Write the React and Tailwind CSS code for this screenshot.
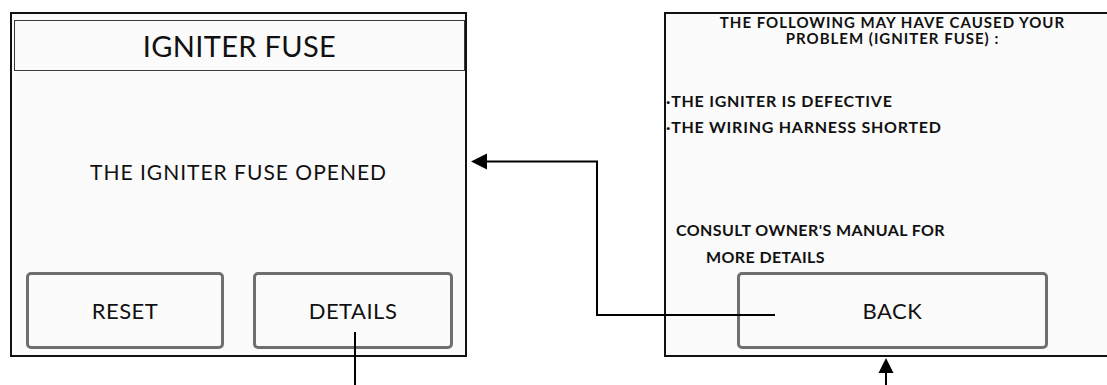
import React from "react";

const font = { fontFamily: '"Lato", "Open Sans", sans-serif' };

function Btn({ className = "", children }) {
  return (
    <div
      className={
        "flex items-center justify-center rounded-[5px] border-[3px] border-[#6f6f6f] bg-[#fbfbfb] text-[22px] tracking-[0.5px] text-[#111] " +
        className
      }
    >
      {children}
    </div>
  );
}

export default function App() {
  return (
    <div
      className="relative h-[385px] w-[1107px] overflow-hidden bg-white text-[#111]"
      style={font}
    >
      <div className="flex pt-[12px] pl-[10px] gap-[197px]">
        {/* Left screen */}
        <div className="flex h-[345px] w-[457px] shrink-0 flex-col border-2 border-[#111] bg-[#fbfbfb]">
          <div className="ml-[2px] mt-[6px] flex h-[51px] w-[451px] items-center justify-center border-[1.5px] border-[#3a3a3a] text-[29px] leading-none tracking-[0.35px]">
            IGNITER FUSE
          </div>
          <div className="mt-[90px] text-center text-[21px] leading-none tracking-[1px]">
            THE IGNITER FUSE OPENED
          </div>
          <div className="mt-auto mb-[6px] ml-[14px] flex gap-[29px]">
            <Btn className="h-[77px] w-[198px]">RESET</Btn>
            <Btn className="h-[77px] w-[200px]">DETAILS</Btn>
          </div>
        </div>

        {/* Right screen */}
        <div className="flex h-[345px] w-[457px] shrink-0 flex-col border-2 border-[#111] bg-[#fbfbfb] font-bold">
          <div className="text-center text-[15px] leading-[16px] tracking-[1px]">
            <div>THE FOLLOWING MAY HAVE CAUSED YOUR</div>
            <div>PROBLEM (IGNITER FUSE) :</div>
          </div>
          <div className="mt-[42px] text-[16px] leading-[26px] tracking-[0.75px]">
            <div>·THE IGNITER IS DEFECTIVE</div>
            <div>·THE WIRING HARNESS SHORTED</div>
          </div>
          <div className="mt-[76px] pl-[10px] text-[16px] leading-[27px] tracking-[0.4px]">
            <div>CONSULT OWNER'S MANUAL FOR</div>
            <div className="pl-[30px]">MORE DETAILS</div>
          </div>
          <div className="mt-auto mb-[6px] ml-[71px]">
            <Btn className="h-[77px] w-[311px] font-normal">BACK</Btn>
          </div>
        </div>
      </div>

      {/* Connector arrows overlay */}
      <svg
        className="pointer-events-none absolute left-0 top-0"
        width="1107"
        height="385"
        viewBox="0 0 1107 385"
      >
        <line x1="355" y1="332" x2="355" y2="385" stroke="#000" strokeWidth="2" />
        <polyline
          points="775,315 597,315 597,161.5 486,161.5"
          fill="none"
          stroke="#000"
          strokeWidth="2"
        />
        <polygon points="471,161.5 487,153.5 487,169.5" fill="#000" />
        <line x1="886" y1="372" x2="886" y2="385" stroke="#000" strokeWidth="2" />
        <polygon points="886,358 878.5,373 893.5,373" fill="#000" />
      </svg>
    </div>
  );
}
